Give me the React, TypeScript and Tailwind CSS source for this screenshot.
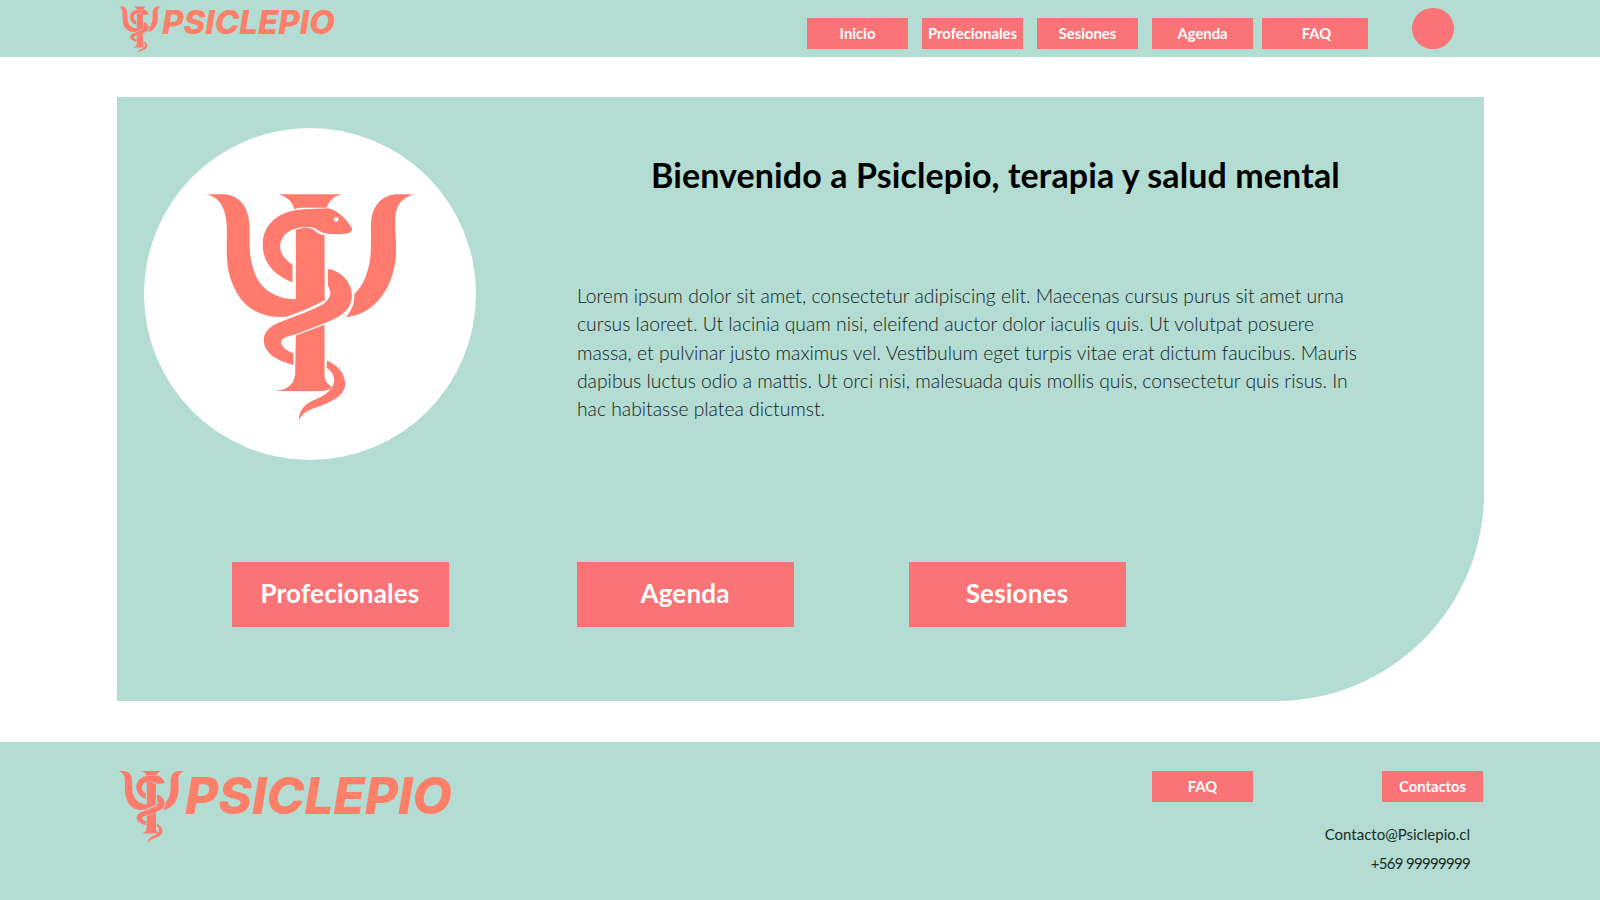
const CORAL = "#FF7B6E";

function PsiMark({ className, eye = true }: { className?: string; eye?: boolean }) {
  return (
    <svg viewBox="225 215 632 686" className={className} fill={CORAL}>
      {/* left arm + stem */}
      <path d="M228 219H285C335 225 357 265 358 315C360 370 355 400 372 450C390 505 440 533 497 533V325C515 318 535 318 550 324C560 335 570 340 583 341V520C583 528 584 532 586 535C550 555 510 572 470 585C410 592 350 570 318 510C295 465 290 430 290 380C290 330 295 290 275 252C265 235 248 222 228 219Z" />
      {/* stem top serif */}
      <path d="M445 219H637C612 224 596 238 590 259H520C510 259 500 261 492 263C488 242 470 225 445 219Z" />
      {/* snake head and upper coil */}
      <path d="M487 482C440 465 398 430 398 370C398 305 450 268 520 264L592 261C620 264 650 295 665 320C668 335 650 340 610 338C585 338 570 333 553 320C525 313 480 318 460 345C440 375 450 405 487 430Z" />
      {/* right arm */}
      <path d="M853 219H795C745 225 722 265 722 315C722 370 725 410 710 455C700 485 690 500 672 518C674 545 665 565 648 586H630C720 592 790 510 797 400C800 340 785 285 805 250C815 235 835 222 853 219Z" />
      {/* middle coil */}
      <path d="M593 443C640 450 665 490 665 522C665 560 640 582 590 602L497 638C470 645 450 650 453 665C458 680 475 690 490 695V730C450 720 405 700 401 660C400 630 420 615 445 604C490 585 540 570 575 550C590 542 603 525 600 510C597 500 595 495 593 492Z" />
      {/* lower stem */}
      <path d="M497 642L583 610V765C585 780 595 790 605 796C600 804 590 808 575 808H433C470 806 490 790 495 760Z" />
      {/* tail */}
      <path d="M590 717C630 735 645 760 645 790C640 830 590 845 550 860C525 870 512 880 507 898C505 870 520 850 545 838C590 820 612 800 612 775C610 755 600 745 590 740Z" />
      {eye && <circle cx="618" cy="294" r="7" fill="#ffffff" />}
    </svg>
  );
}

function NavButton({ label, width = "w-[101px]" }: { label: string; width?: string }) {
  return (
    <a className={`${width} h-[31px] pb-[1px] flex items-center justify-center bg-[#FA7377] text-white text-[14.8px] font-bold`}>
      {label}
    </a>
  );
}

function CtaButton({ label }: { label: string }) {
  return (
    <a className="w-[217px] h-[65px] pb-[2px] flex items-center justify-center bg-[#FA7377] text-white text-[26px] tracking-[0.2px] font-bold">
      {label}
    </a>
  );
}

export default function App() {
  return (
    <div className="w-full min-h-[900px] bg-white font-['Lato',sans-serif] overflow-hidden">
      <header className="h-[57px] bg-[#B3DCD2] flex items-start">
        <div className="ml-[118px] mt-[6px] flex items-start w-[689px]">
          <PsiMark className="w-[44px] h-[48px]" eye={false} />
          <span className="mt-[-4px] font-['Inter',sans-serif] text-[33px] leading-[40px] font-extrabold italic text-[#FF8068]">PSICLEPIO</span>
        </div>
        <nav className="flex items-center mt-[18px]">
          <NavButton label="Inicio" />
          <div className="ml-[14px]"><NavButton label="Profecionales" /></div>
          <div className="ml-[14px]"><NavButton label="Sesiones" /></div>
          <div className="ml-[14px]"><NavButton label="Agenda" /></div>
          <div className="ml-[9px]"><NavButton label="FAQ" width="w-[106px] pl-[3px]" /></div>
        </nav>
        <div className="ml-[44px] mt-[8px] w-[42px] h-[41px] rounded-full bg-[#FA7377]" />
      </header>

      <main className="pt-[40px] pb-[41px]">
        <section className="ml-[116.5px] w-[1367px] h-[604px] bg-[#B3DCD2] rounded-br-[208px] pt-[31px]">
          <div className="flex items-start">
            <div className="ml-[27.5px] w-[332px] h-[332px] rounded-full bg-white flex items-center justify-center shrink-0">
              <PsiMark className="w-[211px] h-[229px] mt-[26px]" />
            </div>
            <div className="ml-[101px]">
              <h1 className="ml-[74px] mt-[26px] text-[34px] leading-[42px] tracking-[0.1px] font-bold text-black whitespace-nowrap">
                Bienvenido a Psiclepio, terapia y salud mental
              </h1>
              <p className="mt-[86px] w-[790px] text-[19.3px] leading-[28.3px] font-light text-[#13211f]">
                Lorem ipsum dolor sit amet, consectetur adipiscing elit. Maecenas cursus purus sit amet urna cursus laoreet. Ut lacinia quam nisi, eleifend auctor dolor iaculis quis. Ut volutpat posuere massa, et pulvinar justo maximus vel. Vestibulum eget turpis vitae erat dictum faucibus. Mauris dapibus luctus odio a mattis. Ut orci nisi, malesuada quis mollis quis, consectetur quis risus. In hac habitasse platea dictumst.
              </p>
            </div>
          </div>
          <div className="flex mt-[102px] ml-[115px]">
            <CtaButton label="Profecionales" />
            <div className="ml-[128px]"><CtaButton label="Agenda" /></div>
            <div className="ml-[115px]"><CtaButton label="Sesiones" /></div>
          </div>
        </section>
      </main>

      <footer className="h-[158px] bg-[#B3DCD2] flex items-start">
        <div className="ml-[118px] mt-[28px] flex items-start w-[1034px]">
          <PsiMark className="w-[67px] h-[74px]" eye={false} />
          <span className="mt-[-5px] font-['Inter',sans-serif] text-[51px] leading-[62px] font-extrabold italic text-[#FF8068]">PSICLEPIO</span>
        </div>
        <div className="mt-[29px]">
          <NavButton label="FAQ" />
        </div>
        <div className="ml-[57px] w-[173px] mt-[29px] flex flex-col items-end">
          <NavButton label="Contactos" />
          <div className="mr-[13px] mt-[18px] text-right text-[15px] leading-[29px] text-[#1c2b28] whitespace-nowrap">
            <div>Contacto@Psiclepio.cl</div>
            <div className="tracking-[-0.7px]">+569 99999999</div>
          </div>
        </div>
      </footer>
    </div>
  );
}
